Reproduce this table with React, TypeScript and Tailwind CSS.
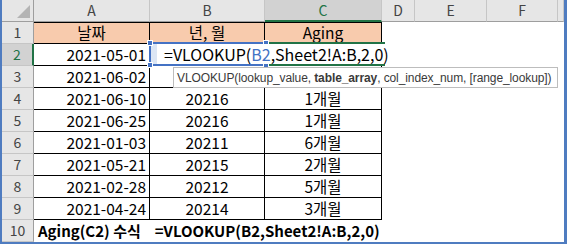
import React from "react";

type Row = { date: string; ym: string; aging: string };

const rows: Row[] = [
    { date: "2021-05-01", ym: "", aging: "" },
    { date: "2021-06-02", ym: "", aging: "" },
    { date: "2021-06-10", ym: "20216", aging: "1개월" },
    { date: "2021-06-25", ym: "20216", aging: "1개월" },
    { date: "2021-01-03", ym: "20211", aging: "6개월" },
    { date: "2021-05-21", ym: "20215", aging: "2개월" },
    { date: "2021-02-28", ym: "20212", aging: "5개월" },
    { date: "2021-04-24", ym: "20214", aging: "3개월" },
];

const font = { fontFamily: '"Malgun Gothic", "Noto Sans CJK KR", "Noto Sans", sans-serif' };

const colHeads = ["A", "B", "C", "D", "E", "F", ""];

export default function App() {
    return (
        <div className="relative w-[567px] h-[244px] bg-white border-l-2 border-r-[3px] border-b-2 border-[#4f7cc0] overflow-hidden" style={font}>
            <div className="grid grid-cols-[32px_116px_115px_117px_33px_72px_71px_1fr] grid-rows-[22px_repeat(10,22px)] text-[15.5px] text-black">
                {/* column header row */}
                <div className="relative bg-[#e6e6e6] border-r border-b border-[#9e9e9e]">
                    <div className="absolute right-[3px] bottom-[3px] w-0 h-0 border-l-[13px] border-l-transparent border-b-[13px] border-b-[#b4b4b4]" />
                </div>
                {colHeads.map((c) => (
                    <div
                        key={c || "rest"}
                        className={
                            c === "C"
                                ? "flex items-center justify-center bg-[#d2d2d2] text-[#217346] border-r border-[#c6c6c6] border-b-2 border-b-[#217346] text-[14px]"
                                : "flex items-center justify-center bg-[#e6e6e6] text-[#444] border-r border-b border-[#c6c6c6] border-b-[#9e9e9e] text-[14px]"
                        }
                    >
                        {c}
                    </div>
                ))}

                {/* row 1 */}
                <RowHead n={1} />
                <div className="flex items-center justify-center bg-[#f8cbad] border-t border-r border-b border-black">날짜</div>
                <div className="flex items-center justify-center bg-[#f8cbad] border-t border-r border-b border-black">년, 월</div>
                <div className="flex items-center justify-center bg-[#f8cbad] border-t border-r border-b border-black">Aging</div>
                <Blank />

                {rows.map((r, i) => (
                    <React.Fragment key={i}>
                        <RowHead n={i + 2} active={i === 0} />
                        <div className="flex items-center justify-end pr-[3px] border-r border-b border-black">{r.date}</div>
                        <div className="flex items-center justify-center border-r border-b border-black">{r.ym}</div>
                        <div className="flex items-center justify-center border-r border-b border-black">{r.aging}</div>
                        <Blank />
                    </React.Fragment>
                ))}

                {/* row 10 */}
                <RowHead n={10} />
                <div className="col-span-7 flex items-center pl-[4px] font-bold whitespace-nowrap text-[15px]">
                    <span>Aging(C2) 수식</span>
                    <span className="ml-[14px]">=VLOOKUP(B2,Sheet2!A:B,2,0)</span>
                </div>
            </div>

            {/* active cell C2 outline */}
            <div className="absolute left-[263px] top-[42px] w-[120px] h-[24px] border-y-2 border-[#217346]" />

            {/* B2 range highlight */}
            <div className="absolute left-[147px] top-[42px] w-[118px] h-[24px] border-2 border-[#4472c4] bg-[#dce6f4]">
                <Handle cls="-left-[4px] -top-[4px]" />
                <Handle cls="-right-[4px] -top-[4px]" />
                <Handle cls="-left-[4px] -bottom-[4px]" />
                <Handle cls="-right-[4px] -bottom-[4px]" />
            </div>

            {/* in-cell editor */}
            <div className="absolute left-[155px] top-[44px] w-[225px] h-[20px] bg-white" />
            <div className="absolute left-[162px] top-[43px] h-[22px] flex items-center text-[16px] whitespace-nowrap">
                =VLOOKUP(<span className="text-[#4472c4]">B2</span>,Sheet2!A:B,2,0)
            </div>

            {/* function tooltip */}
            <div
                className="absolute left-[171px] top-[67px] w-[385px] h-[21px] bg-white border border-[#bdbdbd] flex items-center pl-[3px] text-[12px] tracking-[-0.1px] text-[#3a3a3a] whitespace-nowrap"
                style={{ fontFamily: '"Liberation Sans", Arial, sans-serif' }}
            >
                <span>VLOOKUP(lookup_value,&nbsp;<b>table_array</b>, col_index_num, [range_lookup])</span>
            </div>
        </div>
    );
}

const RowHead = ({ n, active }: { n: number; active?: boolean }) => {
    return (
        <div
            className={
                active
                    ? "flex items-center justify-center bg-[#d2d2d2] text-[#217346] border-b border-[#c6c6c6] border-r-2 border-r-[#217346] text-[14px]"
                    : "flex items-center justify-center bg-[#e6e6e6] text-[#444] border-b border-[#c6c6c6] border-r border-r-[#9e9e9e] text-[14px]"
            }
        >
            {n}
        </div>
    );
};

const Blank = () => <div className="col-span-4" />;

const Handle = ({ cls }: { cls: string }) => (
    <div className={`absolute w-[6px] h-[6px] bg-[#4472c4] border border-white ${cls}`} />
);
